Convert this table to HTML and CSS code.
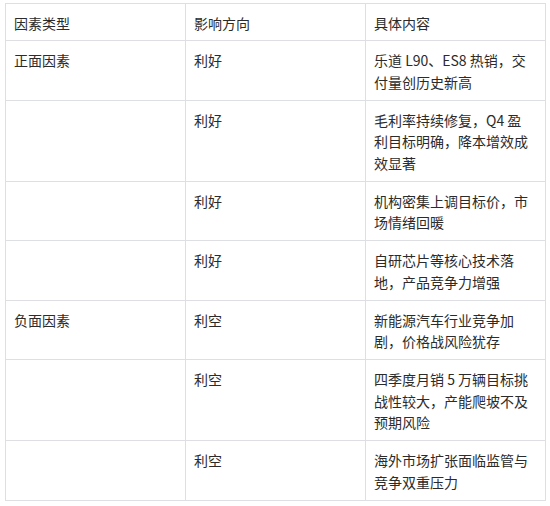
FILE: index.html
```html
<!DOCTYPE html>
<html lang="zh-CN">
<head>
<meta charset="utf-8">
<title>因素分析</title>
<link rel="stylesheet" href="styles.css">
</head>
<body>
<div class="wrap">
<table class="factors">
  <colgroup><col class="c1"><col class="c2"><col class="c3"></colgroup>
  <thead>
    <tr><th>因素类型</th><th>影响方向</th><th class="detail">具体内容</th></tr>
  </thead>
  <tbody>
    <tr><td>正面因素</td><td>利好</td><td class="detail">乐道 L90、ES8 热销，交付量创历史新高</td></tr>
    <tr><td></td><td>利好</td><td class="detail">毛利率持续修复，Q4 盈利目标明确，降本增效成效显著</td></tr>
    <tr><td></td><td>利好</td><td class="detail">机构密集上调目标价，市场情绪回暖</td></tr>
    <tr><td></td><td>利好</td><td class="detail">自研芯片等核心技术落地，产品竞争力增强</td></tr>
    <tr><td>负面因素</td><td>利空</td><td class="detail">新能源汽车行业竞争加剧，价格战风险犹存</td></tr>
    <tr><td></td><td>利空</td><td class="detail">四季度月销 5 万辆目标挑战性较大，产能爬坡不及预期风险</td></tr>
    <tr><td></td><td>利空</td><td class="detail">海外市场扩张面临监管与竞争双重压力</td></tr>
  </tbody>
</table>
</div>
</body>
</html>
```

FILE: styles.css
```css
html, body {
  margin: 0;
  padding: 0;
  background: #fff;
}
.wrap {
  padding: 3px 5px;
}
.factors {
  border-collapse: collapse;
  table-layout: fixed;
  width: 540px;
  font-family: "Noto Sans CJK SC", "Noto Sans", sans-serif;
  font-size: 14px;
  line-height: 21.5px;
  color: #2b2b2b;
}
.c1, .c2, .c3 { width: 180px; }
.factors th,
.factors td {
  border: 1px solid #dedfe2;
  text-align: left;
  vertical-align: top;
  font-weight: normal;
  padding: 9px 8px 6.5px 8px;
}
.factors th {
  padding-bottom: 5.5px;
}
.factors .detail {
  padding-right: 15px;
}
```
